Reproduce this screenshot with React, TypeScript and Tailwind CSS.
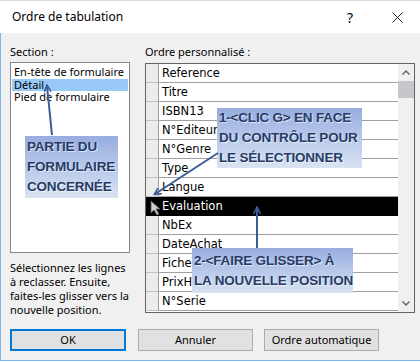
const rows = [
  'Reference',
  'Titre',
  'ISBN13',
  'N°Editeur',
  'N°Genre',
  'Type',
  'Langue',
  'Evaluation',
  'NbEx',
  'DateAchat',
  'FicheLue',
  'PrixHT',
  'N°Serie',
];

const sections = ['En-tête de formulaire', 'Détail', 'Pied de formulaire'];

function Note({ className, lines }: { className: string; lines: string[] }) {
  return (
    <div
      className={`absolute flex flex-col justify-center whitespace-nowrap bg-gradient-to-b from-[#97ade0] to-[#d9e3f2] px-[2px] font-['Liberation_Sans',Arial,sans-serif] text-[13.5px] font-bold leading-[20px] tracking-[-0.2px] text-[#283b66] [text-shadow:1px_1px_1px_rgba(255,255,255,0.7)] ${className}`}
    >
      {lines.map(l => (
        <div key={l}>{l}</div>
      ))}
    </div>
  );
}

export default function App() {
  return (
    <div className="relative h-[362px] w-[420px] overflow-hidden bg-white font-['Noto_Sans',sans-serif] text-[11px] text-black">
      {/* title bar */}
      <div className="flex h-[33px] items-center border-t border-[#d9d9d9] bg-white text-[12px]">
        <span className="ml-[12px] flex-1">Ordre de tabulation</span>
        <span className="mr-[39px] text-[14px]">?</span>
        <svg width="11" height="11" viewBox="0 0 11 11" className="mr-[17px]">
          <path d="M0.5 0.5 L10.5 10.5 M10.5 0.5 L0.5 10.5" stroke="#222" strokeWidth="1" />
        </svg>
      </div>

      {/* body */}
      <div className="flex h-[328px] border-b border-l border-[#7eb4ea] bg-[#f0f0f0] pl-[9px] pt-[12px]">
        {/* left column */}
        <div className="flex w-[120px] flex-col">
          <div className="h-[14px] leading-[14px]">Section :</div>
          <div className="mt-[3px] h-[191px] border border-[#828790] bg-white px-px pt-[3px]">
            {sections.map((s, i) => (
              <div
                key={s}
                className={`h-[12.5px] whitespace-nowrap pl-[2px] leading-[12.5px] ${i === 1 ? 'bg-[#99c9f7]' : ''}`}
              >
                {s}
              </div>
            ))}
          </div>
          <p className="mt-[8px] whitespace-nowrap leading-[14px]">
            Sélectionnez les lignes
            <br />à reclasser. Ensuite,
            <br />faites-les glisser vers la
            <br />nouvelle position.
          </p>
          <button className="mt-auto mb-[9px] h-[22px] w-[116px] border-2 border-[#0078d7] bg-[#e1e1e1]">
            OK
          </button>
        </div>

        {/* right column */}
        <div className="ml-[15px] flex w-[270px] flex-col">
          <div className="h-[14px] leading-[14px]">Ordre personnalisé :</div>
          <div className="mt-[4px] flex h-[250px] border border-[#646464] bg-white font-['DejaVu_Sans',sans-serif] text-[11.5px]">
            <div className="flex-1">
              {rows.map(r => {
                const sel = r === 'Evaluation';
                return (
                  <div key={r} className="flex h-[19px]">
                    <div
                      className={`w-[12px] border-b ${
                        sel ? 'border-black bg-black' : 'border-[#c4c4c4] bg-[#ececec]'
                      }`}
                    />
                    <div
                      className={`flex-1 border-l pl-[3px] leading-[18px] ${
                        sel
                          ? 'border-black bg-black text-white'
                          : 'border-[#a0a0a0] border-b border-b-[#a0a0a0]'
                      }`}
                    >
                      {r}
                    </div>
                  </div>
                );
              })}
            </div>
            {/* scrollbar */}
            <div className="flex w-[16px] flex-col bg-[#f0f0f0]">
              <div className="flex h-[17px] items-center justify-center">
                <svg width="8" height="5" viewBox="0 0 8 5">
                  <path d="M0.5 4.5 L4 1 L7.5 4.5" stroke="#606060" strokeWidth="1.4" fill="none" />
                </svg>
              </div>
              <div className="h-[17px] bg-[#c6c6cc]" />
              <div className="flex-1" />
              <div className="flex h-[17px] items-center justify-center">
                <svg width="8" height="5" viewBox="0 0 8 5">
                  <path d="M0.5 0.5 L4 4 L7.5 0.5" stroke="#606060" strokeWidth="1.4" fill="none" />
                </svg>
              </div>
            </div>
          </div>
          <div className="mt-[16px] flex gap-[11px]">
            <button className="-ml-[7px] h-[22px] w-[115px] border border-[#adadad] bg-[#e1e1e1]">
              Annuler
            </button>
            <button className="h-[22px] w-[115px] border border-[#adadad] bg-[#e1e1e1]">
              Ordre automatique
            </button>
          </div>
        </div>
      </div>

      {/* annotations */}
      <Note className="left-[25px] top-[136px] h-[62px] w-[93px]" lines={['PARTIE DU', 'FORMULAIRE', 'CONCERNÉE']} />
      <Note
        className="left-[217px] top-[108px] h-[60px] w-[145px]"
        lines={['1-<CLIC G> EN FACE', 'DU CONTRÔLE POUR', 'LE SÉLECTIONNER']}
      />
      <Note className="left-[192px] top-[248px] h-[45px] w-[161px]" lines={['2-<FAIRE GLISSER> À', 'LA NOUVELLE POSITION']} />

      <svg className="pointer-events-none absolute inset-0" width="420" height="362">
        <defs>
          <marker id="ah" markerWidth="8" markerHeight="8" refX="6" refY="4" orient="auto" markerUnits="userSpaceOnUse">
            <path d="M0 0.5 L7 4 L0 7.5" fill="none" stroke="#3b5e96" strokeWidth="1.6" />
          </marker>
        </defs>
        <g stroke="#3b5e96" strokeWidth="2" fill="none">
          <line x1="52" y1="135" x2="47" y2="86" markerEnd="url(#ah)" />
          <line x1="218" y1="153" x2="155" y2="194" markerEnd="url(#ah)" />
          <line x1="257" y1="248" x2="257" y2="208" markerEnd="url(#ah)" />
        </g>
        {/* mouse cursor */}
        <path d="M151 201 L151 213 L154 210 L157 215 L159 214 L156 209 L160 209 Z" fill="#cfcfcf" stroke="#555" strokeWidth="0.8" />
      </svg>
    </div>
  );
}
